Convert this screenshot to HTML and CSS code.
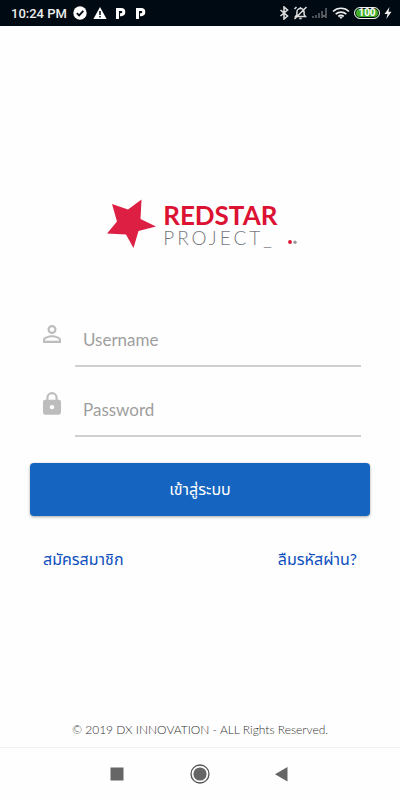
FILE: index.html
```html
<!DOCTYPE html>
<html lang="th">
<head>
  <meta charset="UTF-8" />
  <meta name="viewport" content="width=device-width, initial-scale=1" />
  <title>Redstar Project</title>
  <link rel="stylesheet" href="styles.css">
</head>
<body>

  <header class="status-bar">
    <div class="status-group">
      <span class="clock">10:24 PM</span>
      <svg width="14" height="14" viewBox="0 0 14 14"><circle cx="7" cy="7" r="6.7" fill="#fff"/><path d="M3.8 7.2l2.3 2.2 4.2-4.5" fill="none" stroke="#000a12" stroke-width="1.8"/></svg>
      <svg width="14" height="14" viewBox="0 0 14 14"><path d="M7 1l6.6 12H.4z" fill="#fff"/><path d="M7 5v4M7 10v1.6" stroke="#000a12" stroke-width="1.5"/></svg>
      <svg class="parking" width="12" height="14" viewBox="0 0 12 14"><path d="M2.500 13V4M1 3.500h5.200a2.600 2.600 0 0 1 0 5.200H5" fill="none" stroke="#fff" stroke-width="3"/></svg>
      <svg class="parking" width="12" height="14" viewBox="0 0 12 14"><path d="M2.500 13V4M1 3.500h5.200a2.600 2.600 0 0 1 0 5.200H5" fill="none" stroke="#fff" stroke-width="3"/></svg>
    </div>
    <div class="status-group status-right">
      <svg width="10" height="14" viewBox="0 0 10 14"><path d="M1.500 4l7 6L5 13V1l3.500 3-7 6" fill="none" stroke="#ddd" stroke-width="1.6"/></svg>
      <svg width="15" height="14" viewBox="0 0 14 14"><path d="M2 10.500h10L10.600 8.600V6A3.600 3.600 0 0 0 3.400 6v2.600zM7 2.400V1M5.800 12.600h2.400M1 13L13 1M1 3l2-2" fill="none" stroke="#ddd" stroke-width="1.500"/></svg>
      <svg width="16" height="14" viewBox="0 0 16 14"><path d="M1 12v-2M4 12V9M7 12V7M10 12V5M14 12V2" stroke="#4b5157" stroke-width="2"/><path d="M10 8l4 4M14 8l-4 4" stroke="#666" stroke-width="1"/></svg>
      <svg width="18" height="14" viewBox="0 0 18 14"><path d="M1 5.500a11.500 11.500 0 0 1 16 0M3.700 8.200a7.600 7.600 0 0 1 10.600 0M6.300 10.500a4 4 0 0 1 5.400 0" fill="none" stroke="#eee" stroke-width="1.700"/><path d="M7.500 11.300L9 13l1.500-1.700a2 2 0 0 0-3 0z" fill="#eee"/></svg>
      <span class="battery">100</span>
      <svg width="8" height="12" viewBox="0 0 8 12"><path d="M5.500 0L.5 7h3L2.300 12 7.500 4.800h-3z" fill="#eee"/></svg>
    </div>
  </header>

  <main class="login">
    <div class="logo">
      <svg width="49" height="50" viewBox="0 0 49 50"><path d="M5 5L21 10.500 34.500 .500 33.500 20 49 27.500 31.500 32 26.500 49 19 35.500 0 34.500 10 22.500z" fill="#dc1f43"/></svg>
      <div class="logo-text">
        <h1>REDSTAR</h1>
        <div class="logo-sub">
          <p>PROJECT_</p>
          <svg width="9" height="4" viewBox="0 0 9 4"><circle cx="2" cy="2" r="1.900" fill="#dc1233"/><circle cx="7" cy="2.200" r="1.700" fill="#9a9a9c"/></svg>
        </div>
      </div>
    </div>

    <form class="login-form">
      <div class="field">
        <label for="username" aria-label="Username">
          <svg width="24" height="24" viewBox="0 0 24 24"><path d="M12 5.900a2.100 2.100 0 1 1 0 4.200 2.100 2.100 0 0 1 0-4.200m0 9c2.970 0 6.100 1.460 6.100 2.100v1.100H5.900V17c0-.640 3.130-2.100 6.100-2.100M12 4a4 4 0 1 0 0 8 4 4 0 0 0 0-8zm0 9c-2.670 0-8 1.340-8 4v3h16v-3c0-2.660-5.330-4-8-4z" transform="translate(-1.500 -1.500) scale(1.125)"/></svg>
        </label>
        <input type="text" id="username" placeholder="Username">
      </div>
      <div class="field">
        <label for="password" aria-label="Password">
          <svg width="24" height="24" viewBox="0 0 24 24"><path d="M18 8h-1V6A5 5 0 0 0 7 6v2H6a2 2 0 0 0-2 2v10c0 1.100.900 2 2 2h12a2 2 0 0 0 2-2V10a2 2 0 0 0-2-2zm-6 9a2 2 0 1 1 0-4 2 2 0 0 1 0 4zm3.100-9H8.900V6a3.100 3.100 0 0 1 6.200 0z" transform="translate(-1.500 -1) scale(1.125 1.080)"/></svg>
        </label>
        <input type="password" id="password" placeholder="Password">
      </div>
      <button type="submit" class="login-button">เข้าสู่ระบบ</button>
    </form>

    <div class="links">
      <a href="#register">สมัครสมาชิก</a>
      <a href="#forgot">ลืมรหัสผ่าน?</a>
    </div>

    <footer class="copyright">© 2019 DX INNOVATION - ALL Rights Reserved.</footer>
  </main>

  <nav class="nav-bar">
    <button type="button" aria-label="Recent apps"><svg width="20" height="20" viewBox="0 0 20 20"><path d="M3.500 3.500h13v13h-13z"/></svg></button>
    <button type="button" aria-label="Home"><svg width="20" height="20" viewBox="0 0 20 20"><circle cx="10" cy="10" r="9" fill="none" stroke="#555" stroke-width="1.300"/><circle cx="10" cy="10" r="6.600"/></svg></button>
    <button type="button" aria-label="Back"><svg width="20" height="20" viewBox="0 0 20 20"><path d="M14.500 3v14.500L2 10.200z"/></svg></button>
  </nav>

</body>
</html>
```
FILE: styles.css
```css
* { box-sizing: border-box; }

body {
  --primary: #1565c0;
  --link: #0d4fbd;
  --hint: #9e9e9e;
  --icon: #bdbdbd;
  margin: 0;
  min-height: 100vh;
  display: flex;
  flex-direction: column;
  background: #fefefe;
  font-family: Lato, "Noto Sans Thai", "Noto Sans", sans-serif;
}

/* --- STATUS BAR --- */
.status-bar {
  display: flex;
  align-items: center;
  justify-content: space-between;
  height: 26px;
  padding: 0 8px 0 11px;
  background: #000a12;
  color: #eee;
}
.status-group { display: flex; align-items: center; gap: 6px; }
.status-right { gap: 4px; }
.clock { font: 500 13px Roboto, sans-serif; }
.parking { margin-left: 2px; }
.battery {
  width: 26px;
  height: 12px;
  border: 1px solid #eee;
  border-radius: 6px;
  background: #43b02a;
  box-shadow: inset 0 0 0 1px #000a12;
  color: #fff;
  font: 700 10px/10px Roboto, sans-serif;
  text-align: center;
}

/* --- LOGIN --- */
.login {
  flex: 1;
  display: flex;
  flex-direction: column;
  padding: 173px 30px 0;
}
.logo {
  display: flex;
  justify-content: center;
  gap: 7px;
  padding-left: 4px;
}
.logo-text { padding-top: 2px; }
.logo h1 {
  margin: 0;
  color: #dc1233;
  font-size: 26px;
  font-weight: 700;
  line-height: 28px;
}
.logo-sub { display: flex; align-items: center; gap: 13px; }
.logo p {
  margin: 0;
  color: #77797c;
  font-size: 19px;
  font-weight: 300;
  line-height: 18px;
  letter-spacing: 3px;
}
.logo-sub svg { margin-top: 8px; }

.login-form { padding-top: 63px; }
.field {
  display: flex;
  align-items: flex-start;
  gap: 11px;
  height: 55px;
  margin: 0 9px 15px 10px;
}
.field label { padding-top: 10px; line-height: 0; }
.field svg { fill: var(--icon); }
.field input {
  flex: 1;
  min-width: 0;
  height: 55px;
  padding: 2px 8px 0;
  border: 0;
  border-bottom: 2px solid #d0d0d0;
  background: none;
  color: #444;
  font: 17px Lato, sans-serif;
  outline: none;
}
.field input::placeholder { color: var(--hint); opacity: 1; }
.field input:focus { border-color: var(--primary); }
.login-button {
  width: 100%;
  height: 53px;
  margin-top: 11px;
  border: 0;
  border-radius: 4px;
  background: var(--primary);
  box-shadow: 0 1px 3px rgba(0, 0, 0, 0.35);
  color: #fff;
  font-family: inherit;
  font-size: 16px;
  cursor: pointer;
}

.links {
  display: flex;
  justify-content: space-between;
  padding: 31px 13px 0;
}
.links a {
  color: var(--link);
  font-size: 16px;
  line-height: 24px;
  text-decoration: none;
}
.copyright {
  margin-top: auto;
  padding-bottom: 9px;
  color: #333;
  font-size: 12px;
  font-weight: 300;
  line-height: 16px;
  text-align: center;
}

/* --- NAVIGATION BAR --- */
.nav-bar {
  display: flex;
  align-items: center;
  justify-content: center;
  gap: 63px;
  height: 53px;
  border-top: 1px solid #f2f2f2;
}
.nav-bar button {
  display: flex;
  padding: 0;
  border: 0;
  background: none;
  cursor: pointer;
}
.nav-bar svg { fill: #666; }
```
